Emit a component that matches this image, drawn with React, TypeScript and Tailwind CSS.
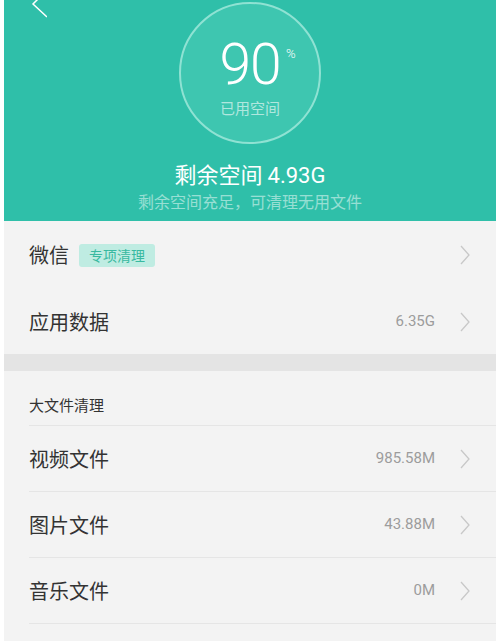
const font = { fontFamily: '"Noto Sans CJK SC", "Noto Sans", sans-serif' }

function Chevron() {
  return (
    <svg width="10" height="20" viewBox="0 0 10 20" className="shrink-0">
      <polyline points="1,1 9,10 1,19" fill="none" stroke="#c8c8c8" strokeWidth="1.3" />
    </svg>
  )
}

const files = [
  { label: '视频文件', size: '985.58M' },
  { label: '图片文件', size: '43.88M' },
  { label: '音乐文件', size: '0M' },
]

export default function App() {
  return (
    <div className="w-[500px] h-[641px] bg-white px-[4px] overflow-hidden" style={font}>
      {/* Header */}
      <div className="relative h-[221px] bg-[#2fbfa9] flex flex-col items-center">
        <svg width="20" height="20" viewBox="0 0 20 20" className="absolute left-[23px] top-0">
          <polyline points="20,-10 6,4 20,17" fill="none" stroke="#ffffff" strokeWidth="1.5" />
        </svg>
        <div className="mt-[2px] w-[142px] h-[142px] rounded-full border-2 border-[#8fe2d3] bg-[#3ec6b0] flex flex-col items-center">
          <div className="relative mt-[33px] flex text-white" style={{ fontFamily: 'Roboto, "Noto Sans", sans-serif' }}>
            <span className="text-[57px] font-light leading-[56px] tracking-[-1px]">90</span>
            <span className="absolute -right-[15px] top-[10px] text-[13px] leading-none font-light">%</span>
          </div>
          <span className="mt-[6px] text-[15px] leading-[18px] text-white/60">已用空间</span>
        </div>
        <div className="mt-[16px] text-[22px] leading-[26px] text-white">
          剩余空间 <span style={{ fontFamily: 'Roboto, sans-serif' }}>4.93G</span>
        </div>
        <div className="mt-[2px] text-[16px] leading-[20px] text-white/50">剩余空间充足，可清理无用文件</div>
      </div>

      {/* Content */}
      <div className="bg-[#f3f3f3] h-[420px]">
        <div className="h-[68px] flex items-center pl-[25px] pr-[26px]">
          <span className="text-[20px] text-[#333333]">微信</span>
          <span className="ml-[10px] h-[23px] px-[10px] flex items-center rounded-[3px] bg-[#bfece2] text-[14px] text-[#38b9a0]">
            专项清理
          </span>
          <div className="flex-1" />
          <Chevron />
        </div>
        <div className="h-[65px] flex items-center pl-[25px] pr-[26px]">
          <span className="text-[20px] text-[#333333]">应用数据</span>
          <div className="flex-1" />
          <span className="text-[15px] text-[#9c9c9c] mr-[25px]" style={{ fontFamily: 'Roboto, sans-serif' }}>6.35G</span>
          <Chevron />
        </div>
        <div className="h-[17px] bg-[#e4e4e4]" />
        <div className="h-[54px] flex items-end pl-[25px] pb-[10px]">
          <span className="text-[15px] leading-[20px] text-[#333333]">大文件清理</span>
        </div>
        <div className="ml-[25px] border-b border-[#e5e5e5]">
          {files.map((f) => (
            <div key={f.label} className="h-[66px] flex items-center pr-[26px] border-t border-[#e5e5e5]">
              <span className="text-[20px] text-[#333333]">{f.label}</span>
              <div className="flex-1" />
              <span className="text-[15px] text-[#9c9c9c] mr-[25px]" style={{ fontFamily: 'Roboto, sans-serif' }}>{f.size}</span>
              <Chevron />
            </div>
          ))}
        </div>
      </div>
    </div>
  )
}
